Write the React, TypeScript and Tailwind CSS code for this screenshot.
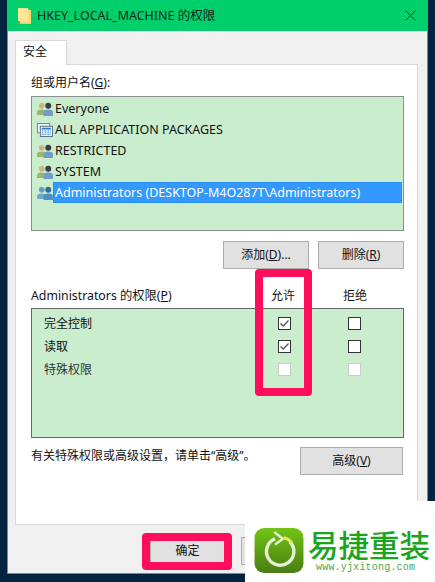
function Users({ blue = false }: { blue?: boolean }) {
  return (
    <svg width="16" height="14" viewBox="0 0 17 15" className="shrink-0">
      <circle cx="5" cy="4" r="3" fill={blue ? "#5f9fc0" : "#c9b77c"} />
      <path d="M0 14V11Q0 8 5 8Q9 8 9 11V14Z" fill={blue ? "#6fa8c8" : "#9bb46a"} />
      <circle cx="12" cy="4" r="3.2" fill={blue ? "#2f6f96" : "#3a3f4a"} />
      <path d="M7 15V11Q7 8 12 8Q17 8 17 11V15Z" fill={blue ? "#4a90c8" : "#6f9cc8"} />
    </svg>
  );
}

function Packages() {
  return (
    <svg width="16" height="14" viewBox="0 0 17 15" className="shrink-0">
      <rect x="0.5" y="0.5" width="13" height="10" fill="#eef4fb" stroke="#6f8296" />
      <rect x="3.5" y="3.5" width="13" height="11" fill="#ffffff" stroke="#5a6a7a" />
      <rect x="5" y="5" width="10" height="2" fill="#2a7fd0" />
      <path d="M5 8.5H15M5 10.5H15M5 12.5H15" stroke="#2a7fd0" strokeDasharray="2 1" />
    </svg>
  );
}

function Check({ checked = false, disabled = false }: { checked?: boolean; disabled?: boolean }) {
  return (
    <div className={`w-[13px] h-[13px] bg-white border flex items-center justify-center ${disabled ? "border-[#cccccc]" : "border-[#333333]"}`}>
      {checked && (
        <svg width="11" height="11" viewBox="0 0 11 11">
          <path d="M1.5 5.5L4.2 8L9.5 2.5" fill="none" stroke="#555555" strokeWidth="1.3" />
        </svg>
      )}
    </div>
  );
}

function Btn({ children, className = "" }: { children?: React.ReactNode; className?: string }) {
  return (
    <div className={`h-[28px] pb-[1px] bg-[#e1e1e1] border border-[#adadad] flex items-center justify-center text-[#111111] ${className}`}>
      {children}
    </div>
  );
}

const rows = [
  { label: "完全控制", checked: true, disabled: false },
  { label: "读取", checked: true, disabled: false },
  { label: "特殊权限", checked: false, disabled: true },
];

export default function App() {
  return (
    <div
      className="relative w-[435px] h-[582px] overflow-hidden bg-[#04233f] px-[7px] pb-[8px] text-[#111111] text-[12px] leading-[18px]"
      style={{ fontFamily: '"Noto Sans", "Noto Sans CJK SC", sans-serif' }}
    >
      <div className="h-[574px] bg-[#f0f0f0] border border-t-0 border-[#00cf6b] flex flex-col">
        <div className="h-[31px] shrink-0 bg-[#00cf6b] flex items-center pl-[10px] pr-[10px]">
          <svg width="13" height="16" viewBox="0 0 14 17" className="shrink-0">
            <rect x="2" y="2" width="12" height="15" fill="#f8d775" />
            <rect x="0" y="0" width="11" height="14" fill="#fde69a" />
          </svg>
          <span className="ml-[6px] text-[12.5px] text-[#10261c]">HKEY_LOCAL_MACHINE 的权限</span>
          <svg width="11" height="11" viewBox="0 0 11 11" className="ml-auto mr-[1px]">
            <path d="M0.5 0.5L10.5 10.5M10.5 0.5L0.5 10.5" stroke="#10261c" strokeWidth="1" />
          </svg>
        </div>

        <div className="pl-[7px] pr-[9px] pt-[9px] flex flex-col">
          <div className="w-[52px] h-[25px] -mb-px z-10 bg-white border border-b-0 border-[#d9d9d9] flex items-center pl-[7px] pb-[2px]">安全</div>
          <div className="h-[461px] bg-white border border-[#d9d9d9] pl-[15px] pr-[13px] pt-[7px]">
            <div className="h-[22px] flex items-center">组或用户名(<span className="underline">G</span>):</div>
            <div className="mt-[2px] h-[135px] bg-[#caedcd] border border-[#8a8f96] pl-[5px] pr-[1px] pt-[1px] text-[12.5px]">
              {["Everyone", "ALL APPLICATION PACKAGES", "RESTRICTED", "SYSTEM"].map((t, i) => (
                <div key={t} className="h-[21px] flex items-center gap-[2px]">
                  {i === 1 ? <Packages /> : <Users />}
                  <span>{t}</span>
                </div>
              ))}
              <div className="h-[21px] flex items-center">
                <Users blue />
                <div className="flex-1 h-[21px] pl-[1px] bg-[#3399ff] border border-dotted border-[#a06030] text-white flex items-center">
                  Administrators (DESKTOP-M4O287T\Administrators)
                </div>
              </div>
            </div>

            <div className="mt-[10px] flex justify-end gap-[9px]">
              <Btn className="w-[86px]">添加(<span className="underline">D</span>)...</Btn>
              <Btn className="w-[86px]">删除(<span className="underline">R</span>)</Btn>
            </div>

            <div className="mt-[18px] h-[21px] flex items-center pb-[3px] whitespace-nowrap">
              <span className="w-[240px] text-[12.3px]">Administrators 的权限(<span className="underline">P</span>)</span>
              <span className="w-[24px]">允许</span>
              <span className="ml-[48px] w-[24px]">拒绝</span>
            </div>
            <div className="h-[130px] bg-[#caedcd] border border-[#666666] pl-[12px] pt-[3px]">
              {rows.map((r) => (
                <div key={r.label} className="h-[23px] flex items-center">
                  <span className={`w-[234px] ${r.disabled ? "text-[#333333]" : ""}`}>{r.label}</span>
                  <Check checked={r.checked} disabled={r.disabled} />
                  <div className="ml-[57px]">
                    <Check disabled={r.disabled} />
                  </div>
                </div>
              ))}
            </div>

            <div className="mt-[9px] flex items-start justify-between pr-[1px]">
              <span>有关特殊权限或高级设置，请单击“高级”。</span>
              <Btn className="w-[103px]">高级(<span className="underline">V</span>)</Btn>
            </div>
          </div>

          <div className="mt-[12px] flex pl-[135px] gap-[16px]">
            <Btn className="w-[75px]">确定</Btn>
            <Btn className="w-[75px]" />
          </div>
        </div>
      </div>

      <div className="absolute left-[255px] top-[269px] w-[57px] h-[127px] border-[8px] border-[#ff0e5c] rounded-[4px]" />
      <div className="absolute left-[142px] top-[533px] w-[90px] h-[37px] border-[8px] border-[#ff0e5c] rounded-[4px]" />

      <div className="absolute left-[245px] top-[501px] w-[190px] h-[81px] bg-white flex items-start pl-[9px] pt-[27px]">
        <svg width="50" height="45" viewBox="0 0 50 46" className="shrink-0">
          <defs>
            <linearGradient id="lg" x1="0" y1="0" x2="0" y2="1">
              <stop offset="0" stopColor="#72c414" />
              <stop offset="1" stopColor="#4a7d14" />
            </linearGradient>
          </defs>
          <rect width="50" height="46" rx="10" fill="url(#lg)" />
          <path d="M21 11A14 14 0 1 0 36 14" fill="none" stroke="#e4f2d4" strokeWidth="3.5" />
          <path d="M20 4L29 11L21 17" fill="none" stroke="#e4f2d4" strokeWidth="2.5" />
          <path d="M30 10Q35 11 38 15" fill="none" stroke="#e8e860" strokeWidth="3" />
        </svg>
        <div className="ml-[4px] flex flex-col items-start">
          <span className="text-[30.5px] leading-[32px] font-medium text-[#1aa51f] whitespace-nowrap" style={{ fontFamily: '"Noto Sans CJK SC", sans-serif' }}>易捷重装</span>
          <span className="mt-[2px] ml-[8px] text-[10px] leading-[12px] text-[#4fa84f] tracking-[0.2px]" style={{ fontFamily: '"Liberation Mono", monospace' }}>www.yjxitong.com</span>
        </div>
      </div>
    </div>
  );
}
